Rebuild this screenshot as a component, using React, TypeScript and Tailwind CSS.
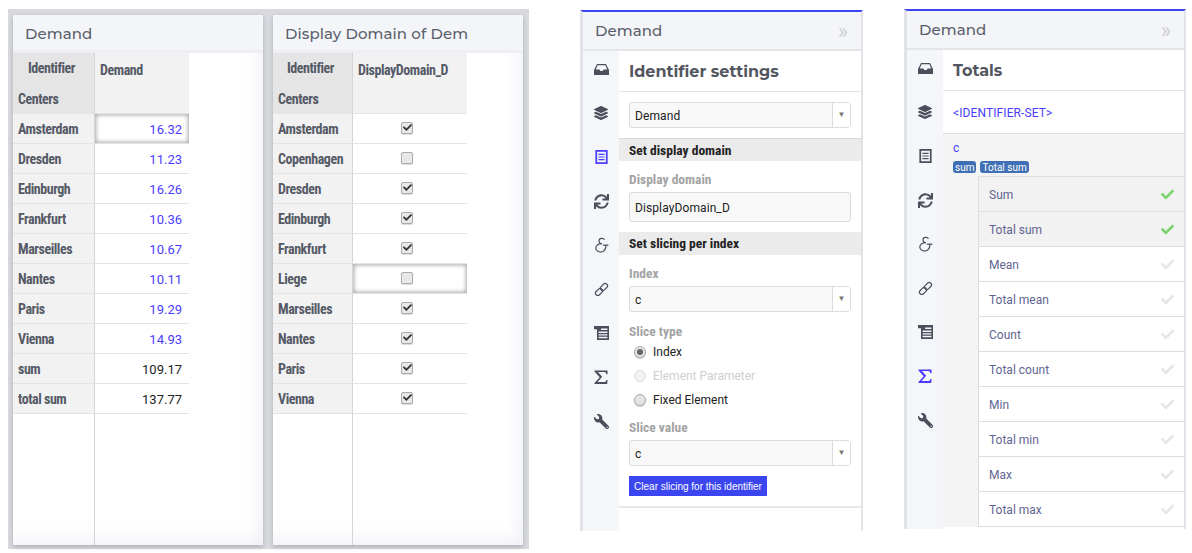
import { FaCheck, FaLayerGroup, FaSync, FaWrench } from "react-icons/fa";

const condensed = "font-['Roboto_Condensed','Liberation_Sans_Narrow',Roboto,sans-serif] [font-stretch:75%] font-bold";
const title = "font-['Montserrat',Inter,sans-serif]";

const demandRows = [
  ["Amsterdam", "16.32"],
  ["Dresden", "11.23"],
  ["Edinburgh", "16.26"],
  ["Frankfurt", "10.36"],
  ["Marseilles", "10.67"],
  ["Nantes", "10.11"],
  ["Paris", "19.29"],
  ["Vienna", "14.93"],
  ["sum", "109.17"],
  ["total sum", "137.77"],
];

const domainRows: [string, boolean][] = [
  ["Amsterdam", true],
  ["Copenhagen", false],
  ["Dresden", true],
  ["Edinburgh", true],
  ["Frankfurt", true],
  ["Liege", false],
  ["Marseilles", true],
  ["Nantes", true],
  ["Paris", true],
  ["Vienna", true],
];

const totals = ["Sum", "Total sum", "Mean", "Total mean", "Count", "Total count", "Min", "Total min", "Max", "Total max"];

function InboxIcon() {
  return (
    <svg viewBox="0 0 15 11" className="h-[11px] w-[15px]" fill="currentColor" fillRule="evenodd">
      <path d="M3 0h9l3 6v5H0V6zM3.6 1.2 1.8 5.5h3.6l1 1.6h2.2l1-1.6h3.6L11.4 1.2z" />
    </svg>
  );
}

function ListIcon({ className }: { className?: string }) {
  return (
    <svg viewBox="0 0 14 16" className={className} fill="none" stroke="currentColor">
      <rect x="1" y="1" width="12" height="14" strokeWidth="2" />
      <path d="M3.5 5h7M3.5 8h7M3.5 11h7" strokeWidth="1.3" />
    </svg>
  );
}

function NewsIcon() {
  return (
    <svg viewBox="0 0 15 14" className="h-[14px] w-[15px] text-[#4b4f5c]" fill="currentColor">
      <path d="M0 0h15v14H3V3.2H0z" />
      <path d="M7 2.5h6.4v1.4H7zM4.6 5.6h8.8V7H4.6zM4.6 8.2h8.8v1.4H4.6zM4.6 10.8h8.8v1.4H4.6z" fill="#f4f6fa" />
    </svg>
  );
}

function SigmaIcon({ className }: { className?: string }) {
  return (
    <svg viewBox="0 0 15 15" className={className} fill="currentColor">
      <path d="M0.5 0.5h14v4h-1.3c-.2-1.5-.7-2.3-2.4-2.3H4.2l4.6 5-5 5.6h7.2c1.4 0 2-.7 2.3-2.2h1.2l-.4 4.4H0.5v-1l5.6-6.3L0.5 1.5z" />
    </svg>
  );
}

function AmpIcon() {
  return (
    <svg viewBox="0 0 15 16" className="h-4 w-[15px]" fill="none" stroke="currentColor" strokeWidth="1.2">
      <path d="M10.5 2.8C9.5 .8 5.2.7 5 3.8c-.1 1.7 1.2 2.8 3 2.8C5 6.6 1.6 8 1.8 11.2 2 14.2 5 15.2 7.3 15c3-.3 4.7-3 4.7-7.2" />
      <path d="M8.8 8.2h5.6" />
    </svg>
  );
}

function LinkIcon() {
  return (
    <svg viewBox="0 0 16 16" className="h-[15px] w-[15px]" fill="none" stroke="currentColor" strokeWidth="1.3">
      <g transform="rotate(-45 8 8)">
        <rect x="0" y="5.5" width="8.6" height="5" rx="2.5" />
        <rect x="7.4" y="5.5" width="8.6" height="5" rx="2.5" />
      </g>
    </svg>
  );
}

function Sidebar({ active }: { active: number }) {
  const color = (i: number) => (i === active ? "text-[#4a3dff]" : "text-[#4b4f5c]");
  return (
    <div className="w-9 shrink-0 bg-[#f4f6fa]">
      <div className="-mt-1 flex flex-col items-center">
        <div className={`flex h-11 items-center ${color(0)}`}><InboxIcon /></div>
        <div className={`flex h-11 items-center ${color(1)}`}><FaLayerGroup size={14} /></div>
        <div className={`flex h-11 items-center ${color(2)}`}><ListIcon className="h-[14px] w-[13px]" /></div>
        <div className={`flex h-11 items-center ${color(3)}`}><FaSync size={15} /></div>
        <div className={`flex h-11 items-center ${color(4)}`}><AmpIcon /></div>
        <div className={`flex h-11 items-center ${color(5)}`}><LinkIcon /></div>
        <div className="flex h-11 items-center"><NewsIcon /></div>
        <div className={`flex h-11 items-center ${color(7)}`}><SigmaIcon className="h-[14px] w-[14px]" /></div>
        <div className={`flex h-11 items-center ${color(8)}`}><FaWrench size={15} className="-scale-x-100" /></div>
      </div>
    </div>
  );
}

function PanelHeader({ text }: { text: string }) {
  return (
    <div className="flex h-[39px] shrink-0 items-center justify-between border-b-2 border-[#e4e5e9] bg-[#f4f5f9] pl-[12px] pr-[13px] pt-[2px]">
      <span className={`${title} text-[15px] font-medium tracking-[0.1px] text-[#5b5f6b]`}>{text}</span>
      <span className="font-['Roboto',sans-serif] text-[22px] leading-none text-[#cfd0d4]">»</span>
    </div>
  );
}

function Select({ value }: { value: string }) {
  return (
    <div className="flex h-[26px] w-[222px] items-center rounded-[3px] border border-[#dcdcdc] bg-[#f8f8f8] font-['Roboto',sans-serif] text-[12px] tracking-[0.1px] text-[#222]">
      <span className="flex-1 pl-[5px] pt-[1px]">{value}</span>
      <span className="flex h-full w-[18px] items-center justify-center border-l border-[#dcdcdc] bg-white text-[8px] text-[#777]">▼</span>
    </div>
  );
}

function FieldLabel({ children }: { children: string }) {
  return <div className={`${condensed} text-[13.5px] leading-[16px] text-[#a3a3a3]`}>{children}</div>;
}

function SectionBar({ children, className }: { children: string; className?: string }) {
  return (
    <div className={`flex h-[23px] items-center bg-[#ebebeb] pl-[10px] ${condensed} text-[13.5px] text-[#222] ${className ?? ""}`}>
      {children}
    </div>
  );
}

function Radio({ label, checked, disabled, className }: { label: string; checked?: boolean; disabled?: boolean; className?: string }) {
  return (
    <div className={`ml-[5px] flex items-center gap-[7px] font-['Roboto',sans-serif] text-[12px] leading-[16px] ${disabled ? "text-[#cfcfcf]" : "text-[#222]"} ${className ?? ""}`}>
      <span className={`flex h-3 w-3 items-center justify-center rounded-full border ${disabled ? "border-[#e0e0e0] bg-[#f2f2f2]" : "border-[#aaa] bg-[#e4e4e4] shadow-[0_1px_1px_rgba(0,0,0,0.2)]"}`}>
        {checked && <span className="h-[6px] w-[6px] rounded-full bg-[#666]" />}
      </span>
      {label}
    </div>
  );
}

function Checkbox({ checked }: { checked: boolean }) {
  return (
    <span className="flex h-3 w-3 items-center justify-center rounded-[2px] border border-[#aaa] bg-[#e8e8e8] text-[#333] shadow-[0_1px_1px_rgba(0,0,0,0.15)]">
      {checked && <FaCheck size={9} />}
    </span>
  );
}

function TablePanel({ heading, firstCol, secondCol, column, children }: { heading: string; firstCol: string; secondCol: string; column: string; children: React.ReactNode }) {
  return (
    <div className="flex h-[530px] w-[250px] flex-col bg-white shadow-[inset_-14px_-14px_20px_-12px_rgba(225,226,238,0.6),0_2px_5px_rgba(0,0,0,0.2)]">
      <div className={`flex h-[35px] shrink-0 items-center overflow-hidden whitespace-nowrap bg-[#f4f5f9] pl-[12px] pt-[3px] ${title} text-[15px] font-medium tracking-[0.1px] text-[#5b5f6b]`}>
        {heading}
      </div>
      <div className="h-[3px] shrink-0 bg-[#eeeff3]" />
      <div className="flex flex-1">
        <div className={`${firstCol} h-full shrink-0 border-r border-[#d5d5d5]`}>
          <div className={`flex h-[30px] items-center justify-center bg-[#e5e5e5] pr-[4px] ${condensed} text-[14px] tracking-[-0.45px] text-[#555a66]`}>Identifier</div>
          <div className={`flex h-[31px] items-center bg-[#e5e5e5] pl-[5px] pt-[1px] ${condensed} text-[14px] tracking-[-0.45px] text-[#555a66]`}>Centers</div>
        </div>
        <div className={`${secondCol} shrink-0`}>
          <div className={`flex h-[61px] items-start border-b border-[#e4e4e4] bg-[#f2f2f2] pl-[5px] pt-[7px] ${condensed} text-[14px] tracking-[-0.45px] text-[#555a66]`}>{column}</div>
        </div>
      </div>
      {children}
    </div>
  );
}

function Cells({ name, firstCol, secondCol, highlight, children }: { name: string; firstCol: string; secondCol: string; highlight?: boolean; children: React.ReactNode }) {
  return (
    <div className="flex h-[30px]">
      <div className={`${firstCol} flex shrink-0 items-center border-b border-r border-b-[#e4e4e4] border-r-[#d5d5d5] bg-[#f2f2f2] pl-[5px] pt-[2px] ${condensed} text-[14px] tracking-[-0.45px] text-[#555a66]`}>
        {name}
      </div>
      <div className={`${secondCol} flex shrink-0 items-center border-b border-[#e4e4e4] ${highlight ? "shadow-[inset_0_0_4px_1px_rgba(0,0,0,0.35)]" : ""}`}>
        {children}
      </div>
    </div>
  );
}

function DemandPanel() {
  return (
    <div className="relative h-[530px] w-[250px]">
      <TablePanel heading="Demand" firstCol="w-[82px]" secondCol="w-[94px]" column="Demand">
        <div className="absolute left-0 top-[99px] w-full">
          {demandRows.map(([name, value], i) => (
            <Cells key={name} name={name} firstCol="w-[82px]" secondCol="w-[94px]" highlight={i === 0}>
              <span className={`w-full pr-[7px] pt-[2px] text-right font-['Roboto',sans-serif] text-[13px] ${i < 8 ? "text-[#4a3dff]" : "text-[#222]"}`}>
                {value}
              </span>
            </Cells>
          ))}
        </div>
      </TablePanel>
    </div>
  );
}

function DomainPanel() {
  return (
    <div className="relative h-[530px] w-[250px]">
      <TablePanel heading="Display Domain of Dem" firstCol="w-[80px]" secondCol="w-[114px]" column="DisplayDomain_D">
        <div className="absolute left-0 top-[99px] w-full">
          {domainRows.map(([name, checked]) => (
            <Cells key={name} name={name} firstCol="w-[80px]" secondCol="w-[114px]" highlight={name === "Liege"}>
              <span className="flex w-full justify-center pb-[2px] pr-[6px]"><Checkbox checked={checked} /></span>
            </Cells>
          ))}
        </div>
      </TablePanel>
    </div>
  );
}

function SettingsPanel() {
  return (
    <div className="mt-[10px] flex h-[521px] w-[283px] shrink-0 flex-col border-l-[3px] border-r-2 border-t-2 border-l-[#e2e3e8] border-r-[#e2e3e8] border-t-[#3b46f1]">
      <PanelHeader text="Demand" />
      <div className="flex flex-1">
        <Sidebar active={2} />
        <div className="flex-1">
          <div className={`flex h-[41px] items-center border-b border-[#e4e4e4] pl-[10px] pt-[1px] ${title} text-[16px] font-bold text-[#53565f]`}>Identifier settings</div>
          <div className="px-[10px] pt-[10px]"><Select value="Demand" /></div>
          <SectionBar className="mt-[10px] border-t border-[#d8d8d8]">Set display domain</SectionBar>
          <div className="px-[10px] pt-[10px]">
            <FieldLabel>Display domain</FieldLabel>
            <div className="mt-[5px] flex h-[30px] w-[222px] items-center rounded-[3px] border border-[#dcdcdc] bg-[#f8f8f8] pl-[5px] pt-[1px] font-['Roboto',sans-serif] text-[12px] tracking-[0.1px] text-[#222]">DisplayDomain_D</div>
          </div>
          <SectionBar className="mt-[10px]">Set slicing per index</SectionBar>
          <div className="px-[10px] pt-[10px]">
            <FieldLabel>Index</FieldLabel>
            <div className="mt-[5px]"><Select value="c" /></div>
            <div className="mt-[11px]"><FieldLabel>Slice type</FieldLabel></div>
            <Radio className="mt-[5px]" label="Index" checked />
            <Radio className="mt-[8px]" label="Element Parameter" disabled />
            <Radio className="mt-[8px]" label="Fixed Element" />
            <div className="mt-[11px]"><FieldLabel>Slice value</FieldLabel></div>
            <div className="mt-[5px]"><Select value="c" /></div>
            <button className="mt-[10px] flex h-5 w-[138px] items-center justify-center whitespace-nowrap bg-[#3b46f1] font-['Liberation_Sans',sans-serif] text-[10px] text-white">Clear slicing for this identifier</button>
          </div>
          <div className="mt-[10px] h-[2px] bg-[#e8e8e8]" />
        </div>
      </div>
    </div>
  );
}

function TotalsPanel() {
  return (
    <div className="mt-[9px] flex h-[520px] w-[282px] shrink-0 flex-col border-l-[3px] border-r-2 border-t-2 border-l-[#e2e3e8] border-r-[#e2e3e8] border-t-[#3b46f1]">
      <PanelHeader text="Demand" />
      <div className="flex flex-1">
        <Sidebar active={7} />
        <div className="flex flex-1 flex-col">
          <div className={`flex h-[41px] shrink-0 items-center border-b border-[#e4e4e4] pl-[10px] pt-[2px] ${title} text-[16px] font-bold text-[#53565f]`}>Totals</div>
          <div className="flex h-[43px] shrink-0 items-center border-b border-[#ddd] pl-[10px] pt-[1px] font-['Roboto',sans-serif] text-[12px] tracking-[0.1px] text-[#4a3dff]">&lt;IDENTIFIER-SET&gt;</div>
          <div className="bg-[#f4f4f4]">
            <div className="pl-[10px] pt-[7px] font-['Roboto',sans-serif] text-[12px] leading-[14px] text-[#4a3dff]">c</div>
            <div className="mt-[6px] flex gap-[4px] pl-[10px]">
              <span className="flex h-3 items-center rounded-[3px] bg-[#3f6fb5] px-[2px] font-['Roboto',sans-serif] text-[10px] text-white">sum</span>
              <span className="flex h-3 items-center rounded-[3px] bg-[#3f6fb5] px-[2px] font-['Roboto',sans-serif] text-[10px] text-white">Total sum</span>
            </div>
            <div className="ml-[35px] mt-[3px] border-l border-t border-[#ddd]">
              {totals.map((t, i) => (
                <div key={t} className={`flex h-[35px] items-center justify-between border-b border-[#ddd] pl-[10px] pr-[10px] font-['Roboto',sans-serif] text-[12px] text-[#5f6590] ${i < 2 ? "bg-[#f2f2f2]" : "bg-white"}`}>
                  <span className="pt-[2px]">{t}</span>
                  <FaCheck size={13} className={i < 2 ? "text-[#7dd36c]" : "text-[#e6e6e6]"} />
                </div>
              ))}
            </div>
          </div>
        </div>
      </div>
    </div>
  );
}

export default function App() {
  return (
    <div className="flex h-[553px] w-[1192px] items-start overflow-hidden bg-white">
      <div className="ml-2 mt-[9px] flex h-[540px] w-[521px] shrink-0 gap-[10px] bg-[#d9dadf] px-[5px] pt-[6px]">
        <DemandPanel />
        <DomainPanel />
      </div>
      <div className="ml-[51px] shrink-0"><SettingsPanel /></div>
      <div className="ml-[41px] shrink-0"><TotalsPanel /></div>
    </div>
  );
}
